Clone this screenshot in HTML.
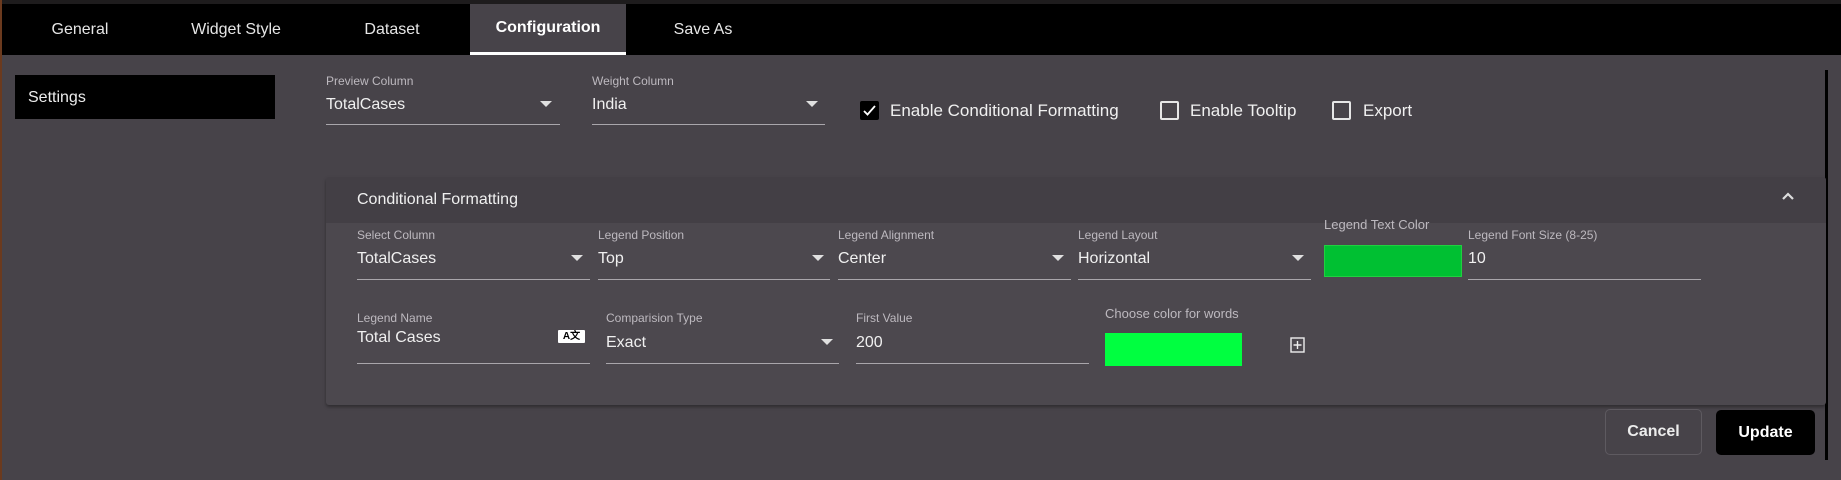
<!DOCTYPE html>
<html><head><meta charset="utf-8"><style>
*{margin:0;padding:0;box-sizing:border-box}
body{width:1841px;height:480px;background:#474349;font-family:"Liberation Sans",sans-serif;color:#ececec;position:relative;overflow:hidden}
.a{position:absolute;white-space:nowrap}
.tab{position:absolute;top:5px;height:51px;line-height:50px;font-size:16px;color:#e6e6e6;text-align:center}
.lbl{position:absolute;font-size:12px;color:#bdb9bf}
.val{position:absolute;font-size:16px;color:#f0f0f0}
.ul{position:absolute;height:1px;background:#a9a6ab}
.arr{position:absolute;width:0;height:0;border-left:6px solid transparent;border-right:6px solid transparent;border-top:6px solid #e0e0e0}
.cb{position:absolute;width:19px;height:19px;border:2px solid #e6e6e6;border-radius:2px}
</style></head><body>
<div class="a" style="left:0;top:0;width:1841px;height:4px;background:#1e1c1d"></div>
<div class="a" style="left:0;top:4px;width:1841px;height:51px;background:#000"></div>
<div class="a" style="left:0;top:0;width:2px;height:480px;background:#6b3a1e"></div>
<div class="tab" style="left:30px;width:100px">General</div>
<div class="tab" style="left:176px;width:120px">Widget Style</div>
<div class="tab" style="left:342px;width:100px">Dataset</div>
<div class="tab" style="left:470px;top:4px;width:156px;background:#474349;font-weight:bold;color:#fff;line-height:48px">Configuration</div>
<div class="a" style="left:470px;top:52px;width:156px;height:3px;background:#fff"></div>
<div class="tab" style="left:653px;width:100px">Save As</div>

<div class="a" style="left:15px;top:75px;width:260px;height:44px;background:#000;font-size:16px;line-height:46px;padding-left:13px">Settings</div>

<div class="lbl" style="left:326px;top:74px">Preview Column</div>
<div class="val" style="left:326px;top:96px">TotalCases</div>
<div class="arr" style="left:540px;top:101px"></div>
<div class="ul" style="left:326px;top:124px;width:234px"></div>
<div class="lbl" style="left:592px;top:74px">Weight Column</div>
<div class="val" style="left:592px;top:96px">India</div>
<div class="arr" style="left:806px;top:101px"></div>
<div class="ul" style="left:592px;top:124px;width:233px"></div>

<div class="cb" style="left:860px;top:101px;background:#000;border-color:#000"><svg width="15" height="15" viewBox="0 0 15 15" style="position:absolute;left:0;top:0"><path d="M2 8l3.5 3.5L13 3" stroke="#fff" stroke-width="1.8" fill="none"/></svg></div>
<div class="val" style="left:890px;top:101px;font-size:17px">Enable Conditional Formatting</div>
<div class="cb" style="left:1160px;top:101px"></div>
<div class="val" style="left:1190px;top:101px;font-size:17px">Enable Tooltip</div>
<div class="cb" style="left:1332px;top:101px"></div>
<div class="val" style="left:1363px;top:101px;font-size:17px">Export</div>

<div class="a" style="left:1825px;top:70px;width:3px;height:390px;background:#000"></div>

<div class="a" style="left:326px;top:177px;width:1500px;height:228px;background:#4c484e;border-radius:3px;box-shadow:0 2px 3px rgba(0,0,0,.35)"></div>
<div class="a" style="left:326px;top:177px;width:1500px;height:46px;background:#433f45;border-radius:3px 3px 0 0"></div>
<div class="val" style="left:357px;top:191px">Conditional Formatting</div>
<svg class="a" style="left:1781px;top:191px" width="14" height="10" viewBox="0 0 14 10"><path d="M2 8l5-5 5 5" stroke="#ddd" stroke-width="2.2" fill="none"/></svg>

<div class="lbl" style="left:357px;top:228px">Select Column</div>
<div class="val" style="left:357px;top:250px">TotalCases</div>
<div class="arr" style="left:571px;top:255px"></div>
<div class="ul" style="left:357px;top:279px;width:233px"></div>
<div class="lbl" style="left:598px;top:228px">Legend Position</div>
<div class="val" style="left:598px;top:250px">Top</div>
<div class="arr" style="left:812px;top:255px"></div>
<div class="ul" style="left:598px;top:279px;width:232px"></div>
<div class="lbl" style="left:838px;top:228px">Legend Alignment</div>
<div class="val" style="left:838px;top:250px">Center</div>
<div class="arr" style="left:1052px;top:255px"></div>
<div class="ul" style="left:838px;top:279px;width:233px"></div>
<div class="lbl" style="left:1078px;top:228px">Legend Layout</div>
<div class="val" style="left:1078px;top:250px">Horizontal</div>
<div class="arr" style="left:1292px;top:255px"></div>
<div class="ul" style="left:1078px;top:279px;width:233px"></div>
<div class="lbl" style="left:1324px;top:217px;font-size:13px">Legend Text Color</div>
<div class="a" style="left:1324px;top:245px;width:138px;height:32px;background:#00c032;border:1px solid #20d040"></div>
<div class="lbl" style="left:1468px;top:228px">Legend Font Size (8-25)</div>
<div class="val" style="left:1468px;top:250px">10</div>
<div class="ul" style="left:1468px;top:279px;width:233px"></div>

<div class="lbl" style="left:357px;top:311px">Legend Name</div>
<div class="val" style="left:357px;top:329px">Total Cases</div>
<div class="a" style="left:558px;top:330px;width:27px;height:13px;background:#fff;color:#000;font-size:10px;font-weight:bold;line-height:13px;text-align:center;border-radius:1px">A文</div>
<div class="ul" style="left:357px;top:363px;width:233px"></div>
<div class="lbl" style="left:606px;top:311px">Comparision Type</div>
<div class="val" style="left:606px;top:334px">Exact</div>
<div class="arr" style="left:821px;top:339px"></div>
<div class="ul" style="left:606px;top:363px;width:233px"></div>
<div class="lbl" style="left:856px;top:311px">First Value</div>
<div class="val" style="left:856px;top:334px">200</div>
<div class="ul" style="left:856px;top:363px;width:233px"></div>
<div class="lbl" style="left:1105px;top:306px;font-size:13px">Choose color for words</div>
<div class="a" style="left:1105px;top:333px;width:137px;height:33px;background:#00ff40"></div>
<svg class="a" style="left:1290px;top:337px" width="15" height="16" viewBox="0 0 15 16"><rect x="1" y="1" width="13" height="14" fill="none" stroke="#eee" stroke-width="1.4"/><path d="M7.5 4v8M3.5 8h8" stroke="#eee" stroke-width="1.4"/></svg>

<div class="a" style="left:1605px;top:409px;width:97px;height:46px;border:1px solid #5e5a60;border-radius:5px;text-align:center;line-height:44px;font-size:16px;font-weight:bold">Cancel</div>
<div class="a" style="left:1716px;top:410px;width:99px;height:45px;background:#000;border-radius:5px;text-align:center;line-height:45px;font-size:16px;font-weight:bold;color:#fff">Update</div>
</body></html>
